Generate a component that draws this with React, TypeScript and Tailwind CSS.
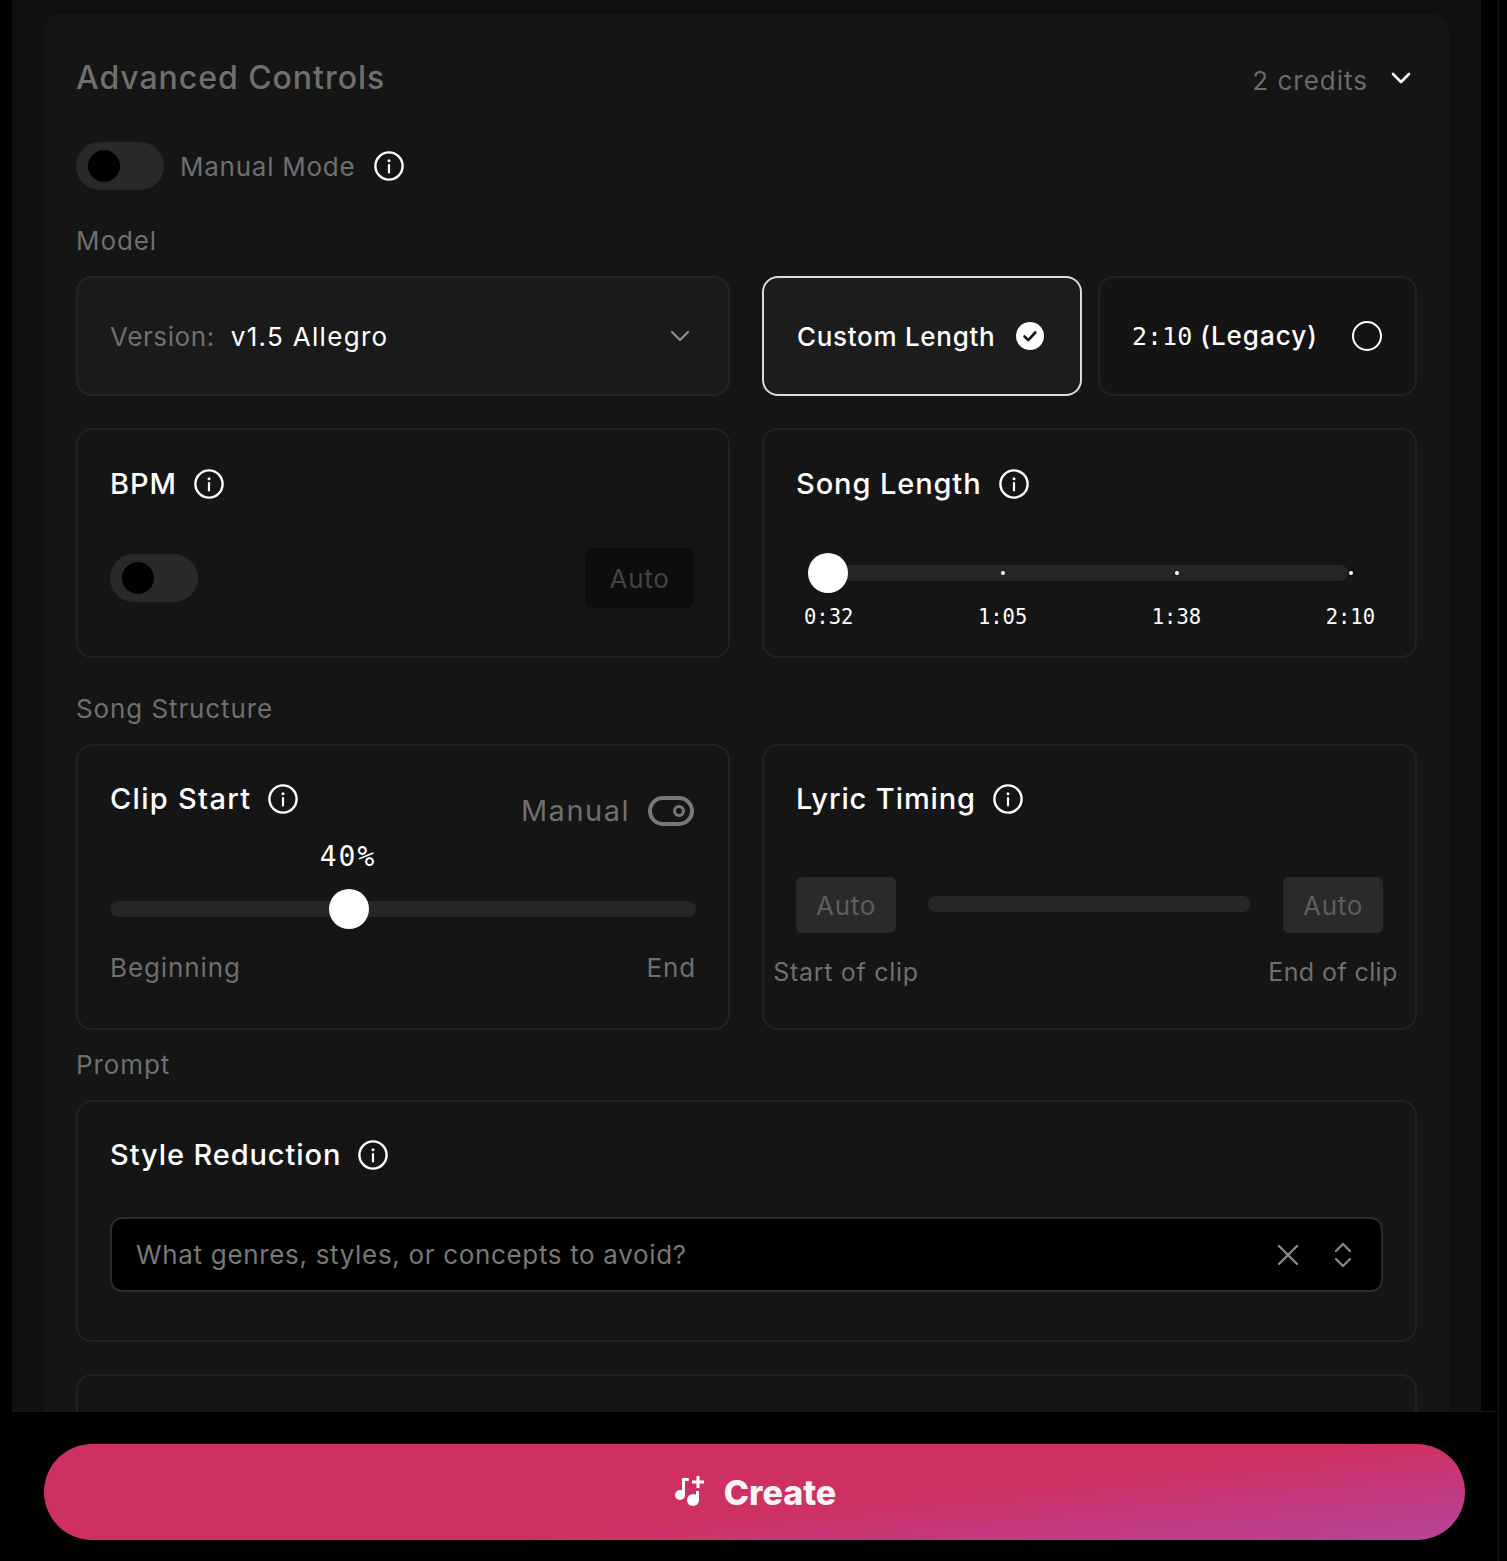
const sans = "font-['Inter','Noto_Sans',sans-serif]";
const mono = "font-['DejaVu_Sans_Mono','Liberation_Mono',monospace]";

function InfoIcon() {
  return (
    <svg width="30" height="30" viewBox="0 0 30 30" fill="none" className="shrink-0">
      <circle cx="15" cy="15" r="13.6" stroke="#fff" strokeWidth="2.4" />
      <circle cx="15" cy="9.8" r="1.5" fill="#fff" />
      <path d="M15 14v7.5" stroke="#fff" strokeWidth="2.2" strokeLinecap="round" />
    </svg>
  );
}

function Chevron({ color, weight }: { color: string; weight: number }) {
  return (
    <svg width="20" height="12" viewBox="0 0 20 12" fill="none" className="shrink-0">
      <path d="M2 2l8 8 8-8" stroke={color} strokeWidth={weight} strokeLinecap="round" strokeLinejoin="round" />
    </svg>
  );
}

function Toggle() {
  return (
    <div className="flex h-12 w-[88px] items-center rounded-full bg-[#292929] pl-3">
      <div className="size-8 rounded-full bg-black" />
    </div>
  );
}

function CardTitle({ title, wide }: { title: string; wide?: boolean }) {
  return (
    <div className="flex items-center gap-[17px]">
      <span className={`text-[29px] leading-[36px] font-medium text-white ${wide ? "tracking-[1.3px]" : "tracking-[0.9px]"}`}>{title}</span>
      <InfoIcon />
    </div>
  );
}

function SectionLabel({ children, className }: { children: string; className: string }) {
  return <div className={`h-6 text-[26px] leading-6 tracking-[0.9px] text-[#6f6f6f] ${className}`}>{children}</div>;
}

export default function App() {
  return (
    <div className={`flex h-[1561px] w-[1507px] flex-col overflow-hidden bg-black ${sans}`}>
      <div className="mr-2 h-[1411px] shrink-0 overflow-hidden border-r border-[#161616] pl-3 pr-[17px]">
        <div className="h-full bg-[#101010] pl-8 pr-8 pt-[14px]">
          <div className="h-[1500px] rounded-t-2xl bg-[#151515] px-8 pt-8">
            {/* Header */}
            <div className="flex h-16 items-center justify-between">
              <h2 className="text-[32px] font-medium tracking-[0.95px] text-[#6f6f6f]">Advanced Controls</h2>
              <div className="flex items-center gap-[23px] pr-[6px]">
                <span className="pt-1 text-[26px] tracking-[1px] text-[#6a6a6a]">2 credits</span>
                <Chevron color="#ffffff" weight={2.6} />
              </div>
            </div>

            <div className="mt-8 flex items-center gap-4">
              <Toggle />
              <span className="text-[26px] tracking-[0.75px] text-[#6f6f6f]">Manual Mode</span>
              <div className="ml-[3px]">
                <InfoIcon />
              </div>
            </div>

            <SectionLabel className="mt-[39px] mb-[23px]">Model</SectionLabel>

            <div className="grid grid-cols-[654px_1fr] gap-x-8 gap-y-8">
              <div className="flex h-[120px] items-center justify-between rounded-2xl border-2 border-[#242424] bg-[#1a1a1a] pl-8 pr-[38px]">
                <div className="flex items-center gap-4 text-[26px]">
                  <span className="tracking-[0.6px] text-[#6f6f6f]">Version:</span>
                  <span className="tracking-[1.3px] text-white">v1.5 Allegro</span>
                </div>
                <Chevron color="#8a8a8a" weight={2.4} />
              </div>

              <div className="flex gap-4">
                <div className="flex h-[120px] w-[320px] items-center justify-between rounded-2xl border-2 border-[#dcdcdc] bg-[#1c1c1c] pl-[33px] pr-[36px]">
                  <span className="text-[26px] font-medium tracking-[0.7px] text-white">Custom Length</span>
                  <svg width="28" height="28" viewBox="0 0 28 28">
                    <circle cx="14" cy="14" r="14" fill="#fff" />
                    <path d="M8.500 14.500l3.800 3.600 7-7.600" fill="none" stroke="#151515" strokeWidth="2.600" strokeLinecap="round" strokeLinejoin="round" />
                  </svg>
                </div>
                <div className="flex h-[120px] flex-1 items-center justify-between rounded-2xl border-2 border-[#222222] bg-[#141414] pl-[32px] pr-[33px]">
                  <span className="text-[26px] font-medium tracking-[1px] text-white">
                    <span className={`${mono} text-[25px] tracking-normal`}>2:10</span> (Legacy)
                  </span>
                  <div className="size-[30px] rounded-full border-[2.5px] border-white" />
                </div>
              </div>

              {/* BPM */}
              <div className="h-[230px] rounded-2xl border-2 border-[#222222] px-8 pt-[36px]">
                <CardTitle title="BPM" />
                <div className="mt-[46px] flex items-center justify-between pr-[2px]">
                  <Toggle />
                  <div className="flex h-[60px] w-[109px] items-center justify-center rounded-lg bg-[#0d0d0d] text-[26px] tracking-[0.7px] text-[#444444]">
                    Auto
                  </div>
                </div>
              </div>

              {/* Song Length */}
              <div className="h-[230px] rounded-2xl border-2 border-[#222222] px-8 pt-[36px]">
                <CardTitle title="Song Length" />
                <div className="relative mt-[51px] ml-[12px] h-10 w-[544px]">
                  <div className="absolute left-5 top-3 h-4 w-[520px] rounded-full bg-[#262626]" />
                  <div className="absolute left-0 top-0 size-10 rounded-full bg-white" />
                  <div className="absolute left-[193px] top-[18px] size-1 rounded-full bg-white" />
                  <div className="absolute left-[367px] top-[18px] size-1 rounded-full bg-white" />
                  <div className="absolute left-[541px] top-[18px] size-1 rounded-full bg-white" />
                </div>
                <div className={`mt-[10px] ml-[8px] flex w-[571px] justify-between text-[20.5px] leading-7 text-white ${mono}`}>
                  <span>0:32</span>
                  <span>1:05</span>
                  <span>1:38</span>
                  <span>2:10</span>
                </div>
              </div>
            </div>

            <SectionLabel className="mt-[39px] mb-[23px]">Song Structure</SectionLabel>

            <div className="grid grid-cols-[654px_1fr] gap-x-8">
              {/* Clip Start */}
              <div className="h-[286px] rounded-2xl border-2 border-[#222222] px-8 pt-[35px]">
                <div className="flex items-start justify-between">
                  <CardTitle title="Clip Start" wide />
                  <div className="mt-[12px] mr-[2px] flex items-center gap-[18px]">
                    <span className="text-[29px] leading-[36px] tracking-[1.5px] text-[#6f6f6f]">Manual</span>
                    <svg width="46" height="30" viewBox="0 0 46 30" fill="none">
                      <rect x="2" y="2" width="42" height="26" rx="13" stroke="#787878" strokeWidth="4" />
                      <circle cx="31" cy="15" r="4.500" stroke="#787878" strokeWidth="3" />
                    </svg>
                  </div>
                </div>
                <div className={`mt-[10px] ml-[208px] w-[60px] text-center text-[28px] leading-9 tracking-[2px] whitespace-nowrap text-white ${mono}`}>40%</div>
                <div className="relative mt-[14px] h-10 w-[586px]">
                  <div className="absolute left-0 top-3 h-4 w-full rounded-full bg-[#262626]" />
                  <div className="absolute left-[219px] top-0 size-10 rounded-full bg-white" />
                </div>
                <div className="mt-[23px] flex w-[586px] justify-between text-[26px] leading-8 tracking-[0.9px] text-[#6f6f6f]">
                  <span>Beginning</span>
                  <span>End</span>
                </div>
              </div>

              {/* Lyric Timing */}
              <div className="h-[286px] rounded-2xl border-2 border-[#222222] px-8 pt-[35px]">
                <CardTitle title="Lyric Timing" />
                <div className="mt-[60px] flex items-start justify-between">
                  <div className="flex w-[100px] flex-col items-center">
                    <div className="flex h-14 w-[100px] items-center justify-center rounded-md bg-[#2a2a2a] text-[26px] tracking-[0.7px] text-[#5e5e5e]">Auto</div>
                    <span className="mt-[27px] text-[25px] leading-6 tracking-[0.7px] whitespace-nowrap text-[#6f6f6f]">Start of clip</span>
                  </div>
                  <div className="mt-[19px] h-4 w-[323px] rounded-full bg-[#262626]" />
                  <div className="flex w-[100px] flex-col items-center">
                    <div className="flex h-14 w-[100px] items-center justify-center rounded-md bg-[#2a2a2a] text-[26px] tracking-[0.7px] text-[#5e5e5e]">Auto</div>
                    <span className="mt-[27px] text-[25px] leading-6 tracking-[0.4px] whitespace-nowrap text-[#6f6f6f]">End of clip</span>
                  </div>
                </div>
              </div>
            </div>

            <SectionLabel className="mt-[23px] mb-[23px]">Prompt</SectionLabel>

            {/* Style Reduction */}
            <div className="h-[242px] rounded-2xl border-2 border-[#222222] px-8 pt-[35px]">
              <CardTitle title="Style Reduction" />
              <div className="mt-[44px] flex h-[75px] items-center justify-between rounded-xl border-2 border-[#2a2a2a] bg-black pl-6 pr-[28px]">
                <span className="text-[26px] tracking-[0.67px] text-[#787878]">What genres, styles, or concepts to avoid?</span>
                <div className="flex items-center gap-[30px] text-[#8a8a8a]">
                  <svg width="30" height="30" viewBox="0 0 30 30" fill="none" stroke="currentColor" strokeWidth="2.400" strokeLinecap="round">
                    <path d="M6 6l18 18M24 6L6 24" />
                  </svg>
                  <svg width="20" height="26" viewBox="0 0 20 26" fill="none" stroke="currentColor" strokeWidth="2.200" strokeLinecap="round" strokeLinejoin="round">
                    <path d="M3 9l7-7 7 7" />
                    <path d="M3 17l7 7 7-7" />
                  </svg>
                </div>
              </div>
            </div>

            <div className="mt-8 h-[120px] rounded-2xl border-2 border-[#222222]" />
          </div>
        </div>
      </div>

      {/* Footer */}
      <div className="mr-2 ml-3 flex-1 border-t border-r border-[#161616] pt-8">
        <div className="ml-8 flex h-24 w-[1421px] items-center justify-center gap-[19px] rounded-full bg-[linear-gradient(174deg,#cf3062_58%,#b6459e_100%)]">
          <svg width="32" height="32" viewBox="0 0 32 32" fill="#fff">
            <circle cx="7" cy="19" r="5" />
            <rect x="9" y="3" width="3" height="16" />
            <rect x="9" y="2" width="7" height="3" rx="1" />
            <circle cx="20" cy="24" r="6" />
            <rect x="23" y="15" width="3" height="9" />
            <rect x="23.500" y="0" width="3" height="12" rx="0.500" />
            <rect x="19" y="4.500" width="12" height="3" rx="0.500" />
          </svg>
          <span className="text-[34px] font-extrabold text-[#fdf3f6]">Create</span>
        </div>
      </div>
    </div>
  );
}
